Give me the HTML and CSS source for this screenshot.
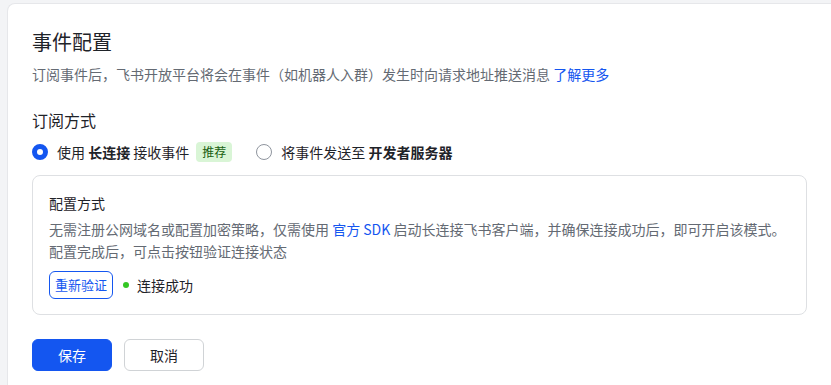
FILE: index.html
```html
<!DOCTYPE html>
<html lang="zh-CN">
<head>
<meta charset="utf-8">
<link rel="stylesheet" href="styles.css">
</head>
<body>
<div class="page">
  <div class="card">
    <h1 class="title">事件配置</h1>
    <p class="desc">订阅事件后，飞书开放平台将会在事件（如机器人入群）发生时向请求地址推送消息 <a class="link">了解更多</a></p>

    <h2 class="section-title">订阅方式</h2>
    <div class="radio-row">
      <label class="radio">
        <span class="radio-dot checked"></span>
        <span class="radio-text">使用 <b>长连接</b> 接收事件</span>
        <span class="tag">推荐</span>
      </label>
      <label class="radio">
        <span class="radio-dot"></span>
        <span class="radio-text">将事件发送至 <b>开发者服务器</b></span>
      </label>
    </div>

    <div class="box">
      <div class="box-title">配置方式</div>
      <p class="box-desc">无需注册公网域名或配置加密策略，仅需使用 <a class="link">官方 SDK</a> 启动长连接飞书客户端，并确保连接成功后，即可开启该模式。<br>配置完成后，可点击按钮验证连接状态</p>
      <div class="verify-row">
        <button class="btn-outline">重新验证</button>
        <span class="status"><span class="status-dot"></span>连接成功</span>
      </div>
    </div>

    <div class="actions">
      <button class="btn btn-primary">保存</button>
      <button class="btn btn-default">取消</button>
    </div>
  </div>
</div>
</body>
</html>
```

FILE: styles.css
```css
* { box-sizing: border-box; }
html, body {
  margin: 0;
  padding: 0;
  background: #f3f4f6;
  font-family: "Noto Sans CJK SC", "Noto Sans", sans-serif;
  color: #1f2329;
  overflow: hidden;
}
.page {
  padding: 3px 0 0 7px;
  height: 385px;
  overflow: hidden;
}
.card {
  background: #fff;
  border: 1px solid #e6e7ea;
  border-right: none;
  border-radius: 8px 0 0 0;
  padding: 24px 24px 40px 24px;
  min-height: 420px;
}
.title {
  margin: 0;
  font-size: 20px;
  line-height: 28px;
  font-weight: 400;
  color: #1f2329;
}
.desc {
  margin: 7px 0 0;
  font-size: 14px;
  line-height: 22px;
  color: #646a73;
}
.link {
  color: #1456f0;
  text-decoration: none;
}
.section-title {
  margin: 23px 0 0;
  font-size: 16px;
  line-height: 24px;
  font-weight: 400;
  color: #1f2329;
}
.radio-row {
  display: flex;
  align-items: center;
  gap: 24px;
  margin-top: 10px;
  height: 20px;
}
.radio {
  display: flex;
  align-items: center;
  font-size: 14px;
  line-height: 22px;
  color: #1f2329;
}
.radio b { font-weight: 700; }
.radio-dot {
  width: 16px;
  height: 16px;
  border-radius: 50%;
  border: 1px solid #8f959e;
  background: #fff;
  margin-right: 9px;
  flex: none;
}
.radio-dot.checked {
  border: 5px solid #1456f0;
}
.tag {
  margin-left: 7px;
  height: 20px;
  padding: 0 6px;
  border-radius: 4px;
  background: #d9f5d6;
  color: #186010;
  font-size: 12px;
  line-height: 20px;
}
.box {
  margin-top: 13px;
  border: 1px solid #dee0e3;
  border-radius: 8px;
  padding: 17px 12px 15px 16px;
}
.box-title {
  font-size: 14px;
  line-height: 20px;
  font-weight: 400;
  color: #1f2329;
}
.box-desc {
  margin: 5px 0 0;
  font-size: 14px;
  line-height: 22px;
  color: #646a73;
}
.verify-row {
  display: flex;
  align-items: center;
  margin-top: 9px;
}
.btn-outline {
  height: 28px;
  padding: 0 5px;
  border: 1px solid #1456f0;
  border-radius: 6px;
  background: #fff;
  color: #1456f0;
  font-family: inherit;
  font-size: 13px;
  line-height: 26px;
}
.status {
  display: flex;
  align-items: center;
  margin-left: 10px;
  font-size: 14px;
  color: #1f2329;
}
.status-dot {
  width: 6px;
  height: 6px;
  border-radius: 50%;
  background: #34c724;
  margin-right: 8px;
}
.actions {
  display: flex;
  gap: 12px;
  margin-top: 24px;
}
.btn {
  width: 80px;
  height: 32px;
  border-radius: 6px;
  font-family: inherit;
  font-size: 14px;
  line-height: 30px;
  padding: 0;
}
.btn-primary {
  background: #1456f0;
  border: 1px solid #1456f0;
  color: #fff;
}
.btn-default {
  background: #fff;
  border: 1px solid #d0d3d6;
  color: #1f2329;
}
```
